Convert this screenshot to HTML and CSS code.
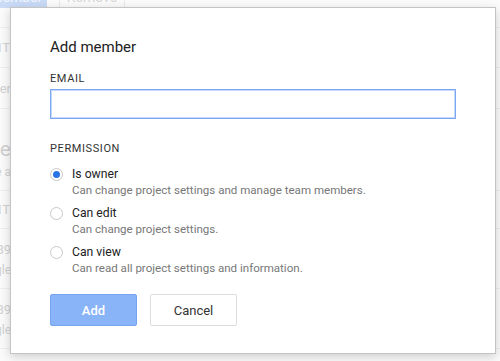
FILE: index.html
```html
<!DOCTYPE html>
<html lang="en">
<head>
  <meta charset="UTF-8" />
  <title>Add member</title>
  <link rel="stylesheet" href="styles.css">
</head>
<body>
  <div class="page">
    <div class="toolbar">
      <button class="tb-btn tb-active">Add member</button>
      <button class="tb-btn tb-remove">Remove</button>
    </div>
    <div class="rows">
      <div class="row r1"><div class="row-label"><span class="cap">ACCOUNT</span></div></div>
      <div class="row r2"><div class="row-label"><span>User</span></div></div>
      <div class="row r3"><div class="row-label"><span class="big">Service</span><span class="sub">Manage a</span></div></div>
      <div class="row r4"><div class="row-label"><span class="cap">ACCOUNT</span></div></div>
      <div class="row r5"><div class="row-label"><span>1289</span><span class="sub">Google</span></div></div>
      <div class="row r5"><div class="row-label"><span>1289</span><span class="sub">Google</span></div></div>
    </div>
  </div>

  <div class="dialog">
    <h2 class="dialog-title">Add member</h2>

    <label class="field-label" for="email">EMAIL</label>
    <input type="text" id="email" class="field-input" />

    <div class="field-label perm-label">PERMISSION</div>
    <div class="options">
      <label class="option">
        <span class="radio checked"></span>
        <span class="opt-text">
          <span class="opt-title">Is owner</span>
          <span class="opt-desc">Can change project settings and manage team members.</span>
        </span>
      </label>
      <label class="option">
        <span class="radio"></span>
        <span class="opt-text">
          <span class="opt-title">Can edit</span>
          <span class="opt-desc">Can change project settings.</span>
        </span>
      </label>
      <label class="option">
        <span class="radio"></span>
        <span class="opt-text">
          <span class="opt-title">Can view</span>
          <span class="opt-desc">Can read all project settings and information.</span>
        </span>
      </label>
    </div>

    <div class="actions">
      <button class="btn btn-primary">Add</button>
      <button class="btn btn-default">Cancel</button>
    </div>
  </div>
</body>
</html>
```

FILE: styles.css
```css
* { margin:0; padding:0; box-sizing:border-box; }
body {
  font-family:Roboto, "Liberation Sans", Arial, sans-serif;
  background:#fbfbfb;
  width:500px; height:361px; overflow:hidden;
  position:relative;
}

/* faded page behind the dialog */
.page { color:#d2d2d2; }
.toolbar { display:flex; gap:12px; height:22px; margin-top:-14px; }
.tb-btn {
  font-family:inherit; font-size:14px; height:22px;
  border:1px solid #ebebeb; background:#fbfbfb; color:#d8d8d8;
}
.tb-active { width:90px; margin-left:-43px; background:#c9dbf7; border-color:#c9dbf7; color:#f2f6fd; }
.tb-remove { width:66px; }
.rows { border-top:1px solid #f0f0f0; margin-top:19px; }
.row { border-bottom:1px solid #efefef; display:flex; font-size:13px; }
.r1 { height:40px; padding-top:12px; }
.r2 { height:41px; padding-top:13px; }
.r3 { height:82px; padding-top:29px; }
.r4 { height:38px; padding-top:11px; }
.r5 { height:60px; padding-top:13px; }
.row-label {
  width:11px; display:flex; flex-direction:column; align-items:flex-end;
}
.row-label span { white-space:nowrap; line-height:16px; }
.row .cap { letter-spacing:1px; }
.row .big { font-size:21px; line-height:22px; }
.row .sub { font-size:12px; margin-top:4px; }

/* dialog */
.dialog {
  position:absolute; left:10px; top:7px;
  width:486px; height:347px;
  background:#fff; border:1px solid #c4c4c4;
  box-shadow:0 3px 10px rgba(0,0,0,0.18);
  padding:29px 40px 0 39px;
}
.dialog-title {
  font-size:15px; font-weight:400; color:#212121;
  line-height:20px; margin-bottom:15px;
}
.field-label {
  display:block; font-size:11px; color:#333;
  letter-spacing:0.6px; line-height:14px;
}
.field-input {
  display:block; width:406px; height:30px; margin-top:3px;
  border:1px solid #7aa7f0; outline:none;
  box-shadow:inset 0 0 0 1px #c6d8fa;
  font-family:inherit; font-size:13px; padding:0 8px;
}
.perm-label { margin-top:23px; }
.options { display:flex; flex-direction:column; gap:7px; margin-top:10px; }
.option { display:flex; gap:9px; align-items:flex-start; }
.radio {
  width:13px; height:13px; border-radius:50%;
  border:1px solid #c8c8c8; margin-top:2px; flex:none;
  display:flex; align-items:center; justify-content:center;
}
.radio.checked::after {
  content:""; width:7px; height:7px; border-radius:50%; background:#2c73e6;
}
.opt-text { display:flex; flex-direction:column; }
.opt-title { font-size:12.2px; color:#222; line-height:16px; }
.opt-desc { font-size:11.55px; color:#777; line-height:16px; }

.actions { display:flex; gap:13px; margin-top:18px; }
.btn {
  width:87px; height:32px; border-radius:2px;
  font-family:inherit; font-size:13px; cursor:pointer;
}
.btn-primary { background:#8ab4f8; border:1px solid #76a3ee; color:#fff; font-weight:500; }
.btn-default { background:#fff; border:1px solid #dcdcdc; color:#333; }
```
